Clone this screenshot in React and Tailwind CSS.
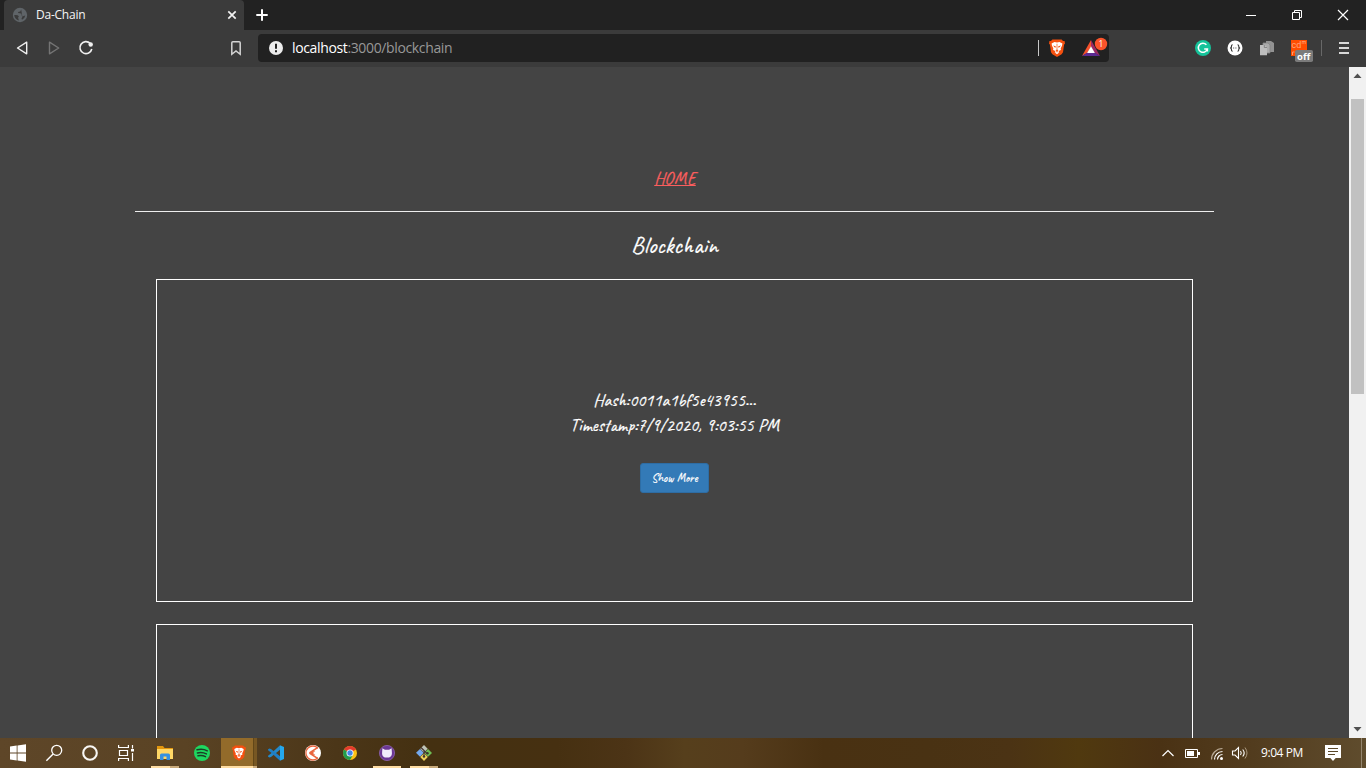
import React from "react";

/* Every icon is drawn on a window-wide pixel grid; `box` is the part of it that is shown. */
function Art({ box, className = "", children }) {
  const [, , w, h] = box;
  return (
    <svg viewBox={box.join(" ")} width={w} height={h} fill="none" className={"block shrink-0 " + className}>
      {children}
    </svg>
  );
}

function BraveLion({ cx, cy, s = 1 }) {
  return (
    <g transform={`translate(${cx} ${cy}) scale(${s})`}>
      <path d="M-4.6-8.6H4.6L6-7.1 7.6-6.9 8-4.2 7.1-3.5 6 4.2 4.6 6.2 0 9-4.6 6.2-6 4.2-7.1-3.5-8-4.2-7.6-6.9-6-7.1Z" fill="#f4500f" />
      <path d="M-2.5-6.1 0-5.4 2.5-6.1 5.4-4.5 5-2.2 3.7.2 3.9 2 1.7 3 2.2 4.6 0 6.3-2.2 4.6-1.7 3-3.9 2-3.7.2-5-2.2-5.4-4.5Z" fill="#fff" />
      <path d="M-4-2.5-1.2-1.8-1.7.1ZM4-2.5 1.2-1.8 1.7.1ZM-1.6 2.1 0 1.4 1.6 2.1 0 3.6Z" fill="#f4500f" />
      <path d="M0-4.3V1.5M-1.5 4.2 0 3.5 1.5 4.2" stroke="#f4500f" strokeWidth=".7" />
    </g>
  );
}

function TabStrip() {
  return (
    <div className="flex h-[30px] shrink-0 bg-[#222222] pl-1">
      <div className="flex w-[240px] items-center rounded-t-[4px] bg-[#3b3b3b] pl-2">
        <Art box={[12, 7, 16, 16]}>
          <circle cx="20" cy="15" r="7.2" fill="#5f6468" />
          <path d="M14.2 15q3.8-.4 4.4.9t-.6 1.6l.9 2.9q-4.2-.9-4.7-5.4ZM21.2 9.6l-.9 1.8-2.3.6q-.2 1.3 1.9 1.2t1.8 1.8 1.8 1.1l1.8-.6q-.5 3-3.3 4.3l-.5-1.5.9-1.3" fill="#3b3b3b" />
        </Art>
        <span className="ml-2 w-[190px] text-[12px] leading-4 tracking-[-0.23px] text-[#f5f5f5]">Da-Chain</span>
        <Art box={[226, 9, 12, 12]}>
          <path d="m228.3 11.3 7.4 7.4m0-7.4-7.4 7.4" stroke="#f2f2f2" strokeWidth="1.7" />
        </Art>
      </div>
      <div className="flex flex-1 items-center pl-3">
        <Art box={[256, 9, 12, 12]}>
          <path d="M256.3 15h11.4M262 9.3v11.4" stroke="#fff" strokeWidth="2" />
        </Art>
      </div>
      <div className="flex items-center gap-[34px] pr-[17px]">
        <Art box={[1245, 8, 12, 12]}>
          <path d="M1246 14.5h10" stroke="#fff" />
        </Art>
        <Art box={[1291, 8, 12, 12]}>
          <path d="M1292.5 11.5h7v7h-7zM1294.5 11.5v-2h7v7h-2" stroke="#fff" />
        </Art>
        <Art box={[1337, 8, 12, 12]}>
          <path d="m1338 9 10 10m0-10-10 10" stroke="#fff" strokeWidth="1.2" />
        </Art>
      </div>
    </div>
  );
}

function Toolbar() {
  return (
    <div className="flex h-[37px] shrink-0 items-center bg-[#3b3b3b] pb-px">
      <Art box={[14, 39, 16, 18]} className="ml-[14px]">
        <path d="M26.7 42.2v11.6L17.5 48Z" stroke="#f0f0f0" strokeWidth="1.4" strokeLinejoin="round" />
      </Art>
      <Art box={[46, 39, 16, 18]} className="ml-4">
        <path d="M49.5 42.2v11.6L58.7 48Z" stroke="#747474" strokeWidth="1.4" strokeLinejoin="round" />
      </Art>
      <Art box={[77, 39, 18, 18]} className="ml-[15px]">
        <path d="M90.2 43.4A6 6 0 1 0 91.8 49" stroke="#f0f0f0" strokeWidth="1.6" />
        <circle cx="90.7" cy="44.5" r="2.2" fill="#f0f0f0" />
      </Art>
      <Art box={[228, 39, 16, 18]} className="ml-[133px]">
        <path d="M231.8 42.8q0-1.1 1.1-1.1h6.2q1.1 0 1.1 1.1v11.5L236 50.9l-4.2 3.4Z" stroke="#d4d4d4" strokeWidth="1.5" />
      </Art>
      <div className="ml-[14px] flex h-7 w-[851px] items-center rounded-[4px] bg-[#212121] pl-[10px]">
        <Art box={[268, 40, 16, 16]}>
          <circle cx="276" cy="48" r="7" fill="#ececec" />
          <path d="M276 43.8v5M276 50.3v2" stroke="#212121" strokeWidth="2" />
        </Art>
        <span className="ml-2 flex-1 whitespace-nowrap text-[14px] leading-5 tracking-[-0.36px] text-[#989898]">
          <span className="text-white">localhost</span>:3000/blockchain
        </span>
        <div className="h-4 w-px bg-[#c8c8c8]" />
        <Art box={[1047, 38, 20, 20]} className="ml-2">
          <BraveLion cx={1057} cy={48} />
        </Art>
        <Art box={[1081, 36, 28, 22]} className="ml-[14px] mb-0.5">
          <path d="M1091 40 1082 56l5.5-3.2 3.5-6Z" fill="#f4512c" />
          <path d="m1091 40 9 16-5.5-3.2-3.5-6Z" fill="#9b2a62" />
          <path d="M1082 56h18l-5.5-3.4h-7Z" fill="#5b2a91" />
          <path d="m1091 46.2 3.9 6.7h-7.8Z" fill="#fff" />
          <circle cx="1101" cy="44" r="6.2" fill="#fb542b" />
          <text x="1101" y="47" textAnchor="middle" fontSize="8.5" fill="#fff">1</text>
        </Art>
      </div>
      <Art box={[1194, 39, 18, 18]} className="ml-[85px]">
        <circle cx="1203" cy="48" r="8" fill="#15c39a" />
        <path d="M1206.4 44.7a4.6 4.6 0 1 0 1 4.2h-3.2M1207.4 48.6v3" stroke="#fff" strokeWidth="1.5" />
      </Art>
      <Art box={[1226, 39, 18, 18]} className="ml-[14px]">
        <circle cx="1235" cy="48" r="7.5" fill="#fff" />
        <path d="M1232.7 44.8q-1.3 0-1.3 1.5v.9l-.8.8.8.8v.9q0 1.5 1.3 1.5M1237.5 44.8q1.3 0 1.3 1.5v.9l.8.8-.8.8v.9q0 1.5-1.3 1.5" stroke="#333" strokeWidth="1.1" />
        <path d="M1233.2 48h1M1235.4 48h1" stroke="#444" />
      </Art>
      <Art box={[1258, 39, 18, 18]} className="ml-[14px]">
        <path d="M1266 41h5l3 2v9h-8Z" fill="#929292" />
        <path d="M1263 43h5l2 2v8h-7Z" fill="#aaa" stroke="#858585" strokeWidth=".8" />
        <path d="M1260 45h4.5l2.5 2.2v8h-7Z" fill="#bdbdbd" />
        <path d="M1264.3 45v2.5h2.7" stroke="#777" strokeWidth=".8" />
      </Art>
      <Art box={[1290, 36, 24, 26]} className="ml-[14px] mt-0.5">
        <path d="M1291 40h16v16h-16z" fill="#ff4d00" />
        <text x="1291.5" y="47.6" fontSize="9" fill="#ffa67d" fontFamily="Roboto, sans-serif">cd</text>
        <text x="1301.8" y="43.8" fontSize="5" fill="#ffb08b" fontFamily="Roboto, sans-serif">m</text>
        <path d="M1292.5 55v-3h2" stroke="#ff9a6c" />
        <rect x="1295" y="50" width="18" height="12" rx="1.8" fill="#7b7b7b" />
        <text x="1303.7" y="60" textAnchor="middle" fontSize="9.5" fontWeight="700" fill="#fff" fontFamily="Open Sans, sans-serif">off</text>
      </Art>
      <div className="ml-[7px] h-4 w-px bg-[#686868]" />
      <Art box={[1338, 41, 12, 14]} className="ml-4">
        <path d="M1339 43h10M1339 48h10M1339 53h10" stroke="#d8d8d8" strokeWidth="1.8" />
      </Art>
    </div>
  );
}

function BlockCard({ children }) {
  return (
    <section className="flex h-[323px] w-[1037px] shrink-0 flex-col items-center border border-white pt-[108px]">
      {children}
    </section>
  );
}

function Page() {
  return (
    <main className="flex min-w-0 flex-1 flex-col items-center overflow-hidden bg-[#444444] pt-[98px] font-['Caveat','Lato',cursive] text-white [-webkit-text-stroke:0.2px]">
      <a className="ml-px h-[26px] text-[18px] leading-[26px] text-[#fa5e5e] underline">HOME</a>
      <div className="mt-5 h-px w-[1079px] shrink-0 bg-[#eeeeee]" />
      <h1 className="mt-[19px] h-7 text-[24px] leading-7">Blockchain</h1>
      <div className="mt-5 flex flex-col gap-[22px]">
        <BlockCard>
          <div className="h-[25px] text-[18px] leading-[25px]">Hash:0011a1bf5e43955...</div>
          <div className="h-[25px] text-[18px] leading-[25px]">Timestamp:7/9/2020, 9:03:55 PM</div>
          <button className="mt-[25px] h-[30px] w-[69px] rounded-[3px] border border-[#2e6da4] bg-[#337ab7] text-[12px] leading-[18px]">Show More</button>
        </BlockCard>
        <BlockCard />
      </div>
    </main>
  );
}

function Scrollbar() {
  return (
    <div className="flex w-[17px] shrink-0 flex-col items-center bg-[#f1f1f1]">
      <Art box={[1349, 67, 17, 17]}>
        <path d="m1357.5 73.5 4 4.5h-8Z" fill="#505050" />
      </Art>
      <div className="mt-[15px] h-[295px] w-[13px] bg-[#c1c1c1]" />
      <Art box={[1349, 721, 17, 17]} className="mt-auto">
        <path d="m1357.5 731.5 4-4.5h-8Z" fill="#505050" />
      </Art>
    </div>
  );
}

function Task({ box, width = "w-[37px]", children }) {
  return (
    <div className={"flex h-[30px] shrink-0 items-center justify-center " + width}>
      <Art box={box}>{children}</Art>
    </div>
  );
}

function Taskbar() {
  return (
    <footer className="flex h-[30px] shrink-0 bg-[#4a3214]">
      <div className="flex flex-1 bg-[linear-gradient(90deg,#5e4628_0%,#5a4324_16%,#4b3618_29%,#443011_37%,#463011_48%,#4c3416_54%,#563f1c_59%,#553c1c_64%,#493112_71%,#493213_80%,#4b3314_87%,#50390f_93%,#4a3114_100%)]">
        <Task box={[0, 738, 36, 30]} width="w-9">
          <path d="m10 746.4 6.7-.9v7h-6.7ZM17.5 745.4l8.5-1.2v8.3h-8.5ZM10 753.4h6.7v7l-6.7-.9ZM17.5 753.4h8.5v8.3l-8.5-1.2Z" fill="#fff" />
        </Task>
        <Task box={[36, 738, 36, 30]} width="w-9">
          <circle cx="56.7" cy="750.3" r="5" stroke="#fff" strokeWidth="1.3" />
          <path d="m53.1 754-6.7 6.8" stroke="#fff" strokeWidth="1.4" />
        </Task>
        <Task box={[72, 738, 36, 30]} width="w-9">
          <circle cx="90" cy="753" r="6.8" stroke="#f8f6f3" strokeWidth="2.1" />
        </Task>
        <Task box={[108, 738, 38, 30]} width="w-[38px]">
          <path d="M118.6 745v2.5h9.8V745M118.6 761v-2.5h9.8v2.5M119.5 750.5h8v5h-8zM132.5 745v3.5M132.5 753v8" stroke="#fff" strokeWidth="1.2" />
          <path d="M131 749h3v2.5h-3z" fill="#fff" />
        </Task>
        <Task box={[146, 738, 38, 30]} width="w-[38px]">
          <path d="M157 746h6l1.5 2h8.5v4h-16Z" fill="#e2960e" />
          <path d="M157 749h16v10h-16z" fill="#ffd765" />
          <path d="M160 760v-5q0-1.5 1.5-1.5h7q1.5 0 1.5 1.5v5h-3.5v-3.5h-3v3.5Z" fill="#3591df" />
          <path d="M151 766h19v2h-19z" fill="#ffdda2" />
          <path d="M170 766h9v2h-9z" fill="#c9aa7b" />
        </Task>
        <Task box={[184, 738, 37, 30]}>
          <circle cx="202" cy="753" r="8" fill="#1ed760" />
          <path d="M197 749.8q5.5-1.5 10.3 1M197.4 752.9q4.8-1.2 9 1M198 755.8q4-1 7.5.8" stroke="#1b3f26" strokeWidth="1.5" strokeLinecap="round" />
        </Task>
        <Task box={[221, 738, 36, 30]} width="w-9">
          <path d="M221 738h32v30h-32z" fill="#936b2a" />
          <path d="M253 738h1v30h-1z" fill="#624718" />
          <path d="M254 738h3v30h-3z" fill="#775723" />
          <path d="M221 766h32v2h-32z" fill="#ffdda2" />
          <path d="M253 766h4v2h-4z" fill="#c9aa7b" />
          <BraveLion cx={239} cy={753} s={0.87} />
        </Task>
        <Task box={[257, 738, 37, 30]}>
          <path d="M280 745.2 271 753.6 268.3 755.6 267.9 756.5 269.3 757.6 271 757 280 749.7Z" fill="#2489ca" />
          <path d="M280 760.8 271 752.4 268.3 750.4 267.9 749.5 269.3 748.4 271 749 280 756.3Z" fill="#1f7fc4" />
          <path d="m280 745.2 4 1.8v12l-4 1.8Z" fill="#25a8ee" />
        </Task>
        <Task box={[294, 738, 37, 30]}>
          <circle cx="313" cy="753" r="8" fill="#fff" />
          <path d="M318 748.2a7 7 0 1 0 0 9.6" stroke="#e9663e" strokeWidth="1.3" />
          <path d="m309.5 753 8-5.4M309.5 753l8 5.4" stroke="#e9663e" strokeWidth="1.6" />
          <path d="m309.5 753 2.6-1.8h3.2l-2.4 1.8 2.4 1.8h-3.2Z" fill="#e9663e" />
        </Task>
        <Task box={[331, 738, 38, 30]} width="w-[38px]">
          <circle cx="350" cy="753" r="7" fill="#fbc116" />
          <path d="M350 753 343.94 749.5A7 7 0 0 1 356.06 749.5Z" fill="#e33b2e" />
          <path d="M350 753 343.94 749.5A7 7 0 0 0 350 760l3-5Z" fill="#219b4e" />
          <circle cx="350" cy="753" r="3.5" fill="#fff" />
          <circle cx="350" cy="753" r="2.7" fill="#4285e8" />
        </Task>
        <Task box={[369, 738, 37, 30]}>
          <circle cx="387" cy="753" r="7.6" fill="#6b3795" stroke="#8d62ae" strokeWidth=".8" />
          <path d="m382.4 748.3 2.5 1.4h4.2l2.5-1.4.3 4.1c.4 3.5-1.8 5.2-4.9 5.2s-5.3-1.7-4.9-5.2Z" fill="#f1ecfb" />
          <path d="M373 766h28v2h-28z" fill="#ffdda2" />
        </Task>
        <Task box={[406, 738, 37, 30]}>
          <path d="m424 745 3.7 3.7-3.7 3.7-3.7-3.7Z" fill="#bfc4b8" />
          <path d="m420 749 3.7 3.7-3.7 4-4-4Z" fill="#75a9ec" />
          <path d="m428 749 4 3.9-4 3.8-3.7-3.8Z" fill="#70bd55" />
          <path d="m424 753.2 3.8 3.8-3.8 4-3.8-4Z" fill="#eed158" />
          <path d="M421 747.5 427.5 754M424 750.5v6" stroke="#443737" strokeWidth="1.1" />
          <circle cx="424" cy="756.5" r="1.2" fill="#40352c" />
          <circle cx="427.5" cy="753.3" r="1.2" fill="#40352c" />
          <path d="M410 766h19v2h-19z" fill="#ffdda2" />
          <path d="M429 766h9v2h-9z" fill="#c9aa7b" />
        </Task>
      </div>
      <div className="flex w-[206px] items-center bg-[linear-gradient(90deg,#4a3214,#523c1e_45%,#5f4c2d)]">
        <Art box={[1160, 738, 92, 30]}>
          <path d="m1162.5 756 5.5-5.5 5.5 5.5" stroke="#fff" strokeWidth="1.2" />
          <path d="M1185.5 749.5h12v8h-12z" stroke="#fff" />
          <path d="M1187 751h7v5h-7zM1198 752h2v3h-2z" fill="#fff" />
          <path d="M1211.5 759.5a11 11 0 0 1 11-11" stroke="#b9aa96" strokeWidth="1.2" />
          <path d="M1214.5 759.5a8 8 0 0 1 8-8M1217.5 759.5a5 5 0 0 1 5-5" stroke="#fff" strokeWidth="1.2" />
          <circle cx="1221.5" cy="758.5" r="1.5" fill="#fff" />
          <path d="M1232.5 751h2.5l3.5-3.5v11L1235 755h-2.5Z" stroke="#fff" strokeWidth="1.1" />
          <path d="M1240.5 751q1.5 2 0 4M1242.7 749.5q3 3.5 0 7" stroke="#fff" strokeWidth="1.1" />
          <path d="M1245 747.5q4 5.5 0 11" stroke="#a9987e" />
        </Art>
        <span className="ml-[9px] w-[43px] whitespace-nowrap text-[12px] leading-4 tracking-[-0.42px] text-white">9:04 PM</span>
        <Art box={[1323, 743, 20, 20]} className="ml-[19px]">
          <path d="M1325 745h16v13h-5.3l-2.7 3-2.7-3h-5.3Z" fill="#fff" />
          <path d="M1328 748.5h10M1328 751.5h10M1328 754.5h7" stroke="#5b4829" />
        </Art>
        <div className="ml-[18px] h-[30px] w-px bg-[#94856e]" />
      </div>
    </footer>
  );
}

export default function App() {
  return (
    <div className="flex h-[768px] w-[1366px] flex-col overflow-hidden font-['Segoe_UI','Open_Sans','Noto_Sans',sans-serif]">
      <TabStrip />
      <Toolbar />
      <div className="flex min-h-0 flex-1">
        <Page />
        <Scrollbar />
      </div>
      <Taskbar />
    </div>
  );
}
